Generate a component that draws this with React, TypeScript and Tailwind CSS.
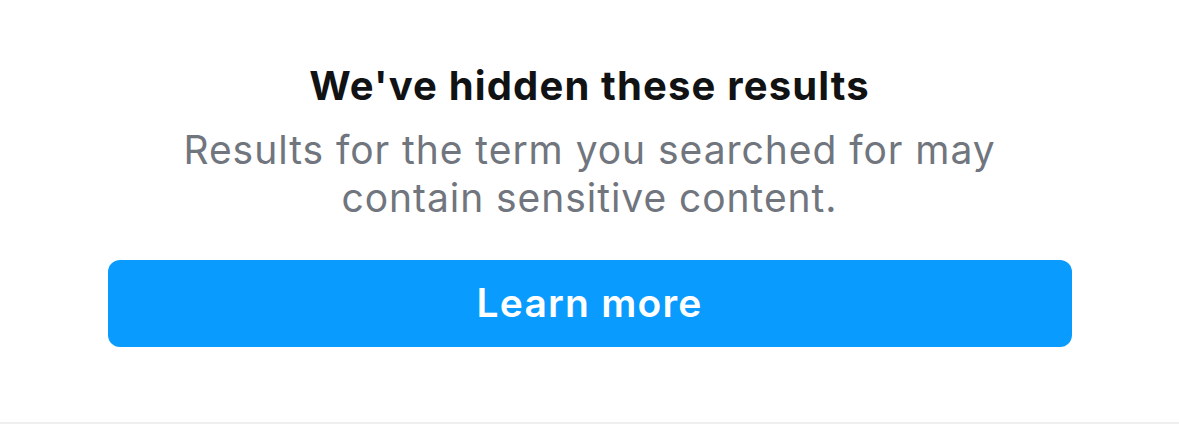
import React from "react";

export default function App() {
  return (
    <div className="w-[1179px] h-[444px] bg-white flex flex-col" style={{ fontFamily: "Inter, 'Noto Sans', sans-serif" }}>
      <div className="flex flex-col items-center pt-[62px] h-[422px]">
        <h2 className="text-[40px] leading-[47px] font-bold text-[#111214] tracking-[1.15px]">
          We've hidden these results
        </h2>
        <p className="mt-[17px] text-[39px] leading-[48px] text-[#70757e] text-center tracking-[0.95px]">
          Results for the term you searched for may
          <br />
          contain sensitive content.
        </p>
        <button className="mt-[38px] w-[964px] h-[87px] rounded-[12px] bg-[#0a9bfe] text-white text-[39px] font-semibold tracking-[1.2px]">
          Learn more
        </button>
      </div>
      <div className="h-[2px] bg-[#efefef]" />
      <div className="flex-1 bg-white" />
    </div>
  );
}
